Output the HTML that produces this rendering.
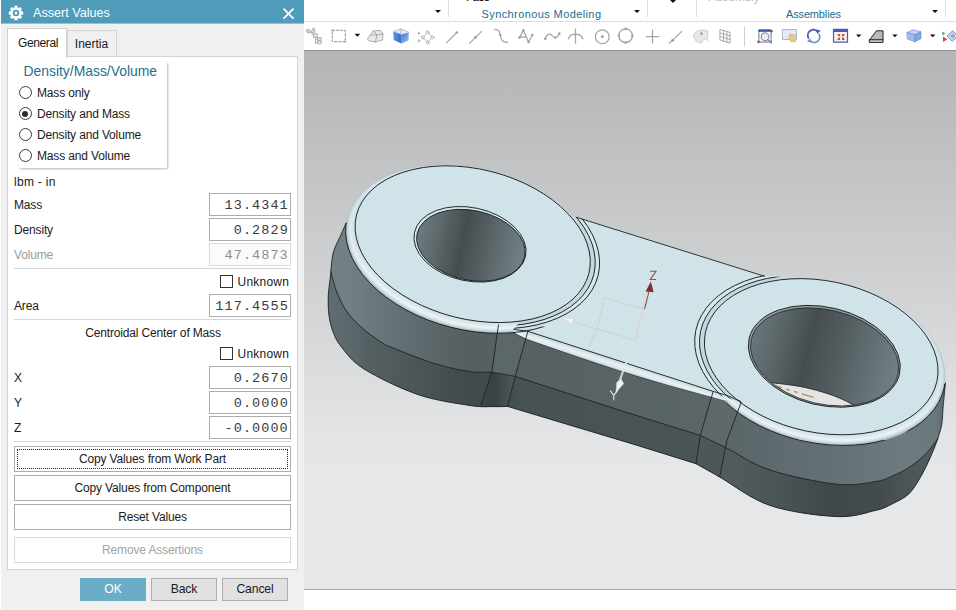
<!DOCTYPE html>
<html>
<head>
<meta charset="utf-8">
<title>Assert Values</title>
<style>
*{box-sizing:border-box;margin:0;padding:0}
html,body{width:956px;height:610px;overflow:hidden;background:#fff}
body{position:relative;font-family:"Liberation Sans",sans-serif;font-size:12px;letter-spacing:-.15px;color:#1a1a1a}
.abs{position:absolute}
#scene{position:absolute;left:0;top:0;width:956px;height:610px}
/* ribbon */
#ribbon{position:absolute;left:304px;top:0;width:652px;height:50px;background:#fff;overflow:hidden}
.rsep{position:absolute;top:0;width:1px;height:17px;background:#dcdcdc}
.rlabel{position:absolute;top:7px;height:14px;line-height:14px;font-size:11px;color:#1b6d8c;white-space:nowrap}
.dd{position:absolute;width:0;height:0;border-left:3px solid transparent;border-right:3px solid transparent;border-top:3.5px solid #111}
/* dialog */
#dlg{position:absolute;left:1px;top:0;width:303px;height:610px;background:#f0f0f0}
#title{position:absolute;left:0;top:0;width:303px;height:24px;background:#4e9cba;color:#fff;border-bottom:1px solid #93c3d5}
#title .t{position:absolute;left:32px;top:4.8px;font-size:12.6px;line-height:17px;letter-spacing:0px;white-space:nowrap;color:#fdfefe}
#panel{position:absolute;left:6px;top:56px;width:291px;height:514px;background:#fff;border:1px solid #d4d4d4}
.tab{position:absolute;border:1px solid #d4d4d4;border-bottom:none;white-space:nowrap;text-align:center}
.lbl{position:absolute;height:16px;line-height:16px;white-space:nowrap}
.inp{position:absolute;left:208px;width:82px;height:23px;border:1px solid #adadad;background:#fff;font-family:"Liberation Mono",monospace;font-size:13.5px;letter-spacing:1.08px;text-align:right;line-height:24px;padding-right:1.2px;color:#3a3a3a;white-space:nowrap}
.inp.dis{border-color:#dcdcdc;color:#8d8d8d;background:#fbfbfb}
.hr{position:absolute;left:13px;width:277px;height:1px;background:#d5d5d5}
.radio{position:absolute;left:17.8px;width:13px;height:13px;border:1px solid #3c3c3c;border-radius:50%;background:#fff}
.radio.on::after{content:"";position:absolute;left:2.5px;top:2.5px;width:6px;height:6px;border-radius:50%;background:#2a2a2a}
.chk{position:absolute;left:219px;width:13px;height:13px;border:1px solid #333;background:#fff}
.btn{position:absolute;left:13px;width:277px;height:26px;border:1px solid #adadad;background:#fff;text-align:center;line-height:24px;white-space:nowrap}
.btn.dis{border-color:#dadada;color:#a3a3a3}
.btn2{position:absolute;top:578px;width:66px;height:23px;border:1px solid #adadad;background:#e1e1e1;text-align:center;line-height:21px;font-size:12.2px}
</style>
</head>
<body>

<!-- ===== 3D viewport + model ===== -->
<svg id="scene" viewBox="0 0 956 610" width="956" height="610">
<defs>
<linearGradient id="bg" x1="0" y1="0" x2="0" y2="1"><stop offset="0" stop-color="#b3b4b6"/><stop offset=".74" stop-color="#e5e6e7"/><stop offset="1" stop-color="#e7e8e9"/></linearGradient>
<linearGradient id="wallU" gradientUnits="userSpaceOnUse" x1="328" y1="0" x2="946" y2="0"><stop offset="0.000" stop-color="#6f7e83"/><stop offset="0.028" stop-color="#728186"/><stop offset="0.068" stop-color="#6b797d"/><stop offset="0.149" stop-color="#5f6b6e"/><stop offset="0.214" stop-color="#566062"/><stop offset="0.278" stop-color="#565f62"/><stop offset="0.440" stop-color="#596366"/><stop offset="0.602" stop-color="#5a6568"/><stop offset="0.650" stop-color="#5a6568"/><stop offset="0.731" stop-color="#5f6b6e"/><stop offset="0.845" stop-color="#667376"/><stop offset="0.926" stop-color="#6d7a7e"/><stop offset="0.982" stop-color="#6b787c"/><stop offset="1.000" stop-color="#5f6b6e"/></linearGradient>
<linearGradient id="wallL" gradientUnits="userSpaceOnUse" x1="328" y1="0" x2="946" y2="0"><stop offset="0.000" stop-color="#606d70"/><stop offset="0.028" stop-color="#5d6a6d"/><stop offset="0.068" stop-color="#556063"/><stop offset="0.149" stop-color="#4b5456"/><stop offset="0.214" stop-color="#434b4d"/><stop offset="0.278" stop-color="#41494b"/><stop offset="0.311" stop-color="#485153"/><stop offset="0.586" stop-color="#4a5355"/><stop offset="0.650" stop-color="#525c5f"/><stop offset="0.731" stop-color="#4a5355"/><stop offset="0.812" stop-color="#3f4749"/><stop offset="0.893" stop-color="#434b4d"/><stop offset="0.958" stop-color="#4f595b"/><stop offset="1.000" stop-color="#566164"/></linearGradient>
<linearGradient id="fb9" x1="0" y1="0" x2="0" y2="1"><stop offset=".4" stop-color="#b2c4ca"/><stop offset=".85" stop-color="#acbcc1"/></linearGradient><linearGradient id="fb8" x1="0" y1="0" x2="0" y2="1"><stop offset=".4" stop-color="#c0d2d8"/><stop offset=".85" stop-color="#c3d2d6"/></linearGradient><linearGradient id="fb7" x1="0" y1="0" x2="0" y2="1"><stop offset=".4" stop-color="#cbdbe1"/><stop offset=".85" stop-color="#d6e2e6"/></linearGradient><linearGradient id="fb6" x1="0" y1="0" x2="0" y2="1"><stop offset=".4" stop-color="#d0e0e5"/><stop offset=".85" stop-color="#e3ecef"/></linearGradient><linearGradient id="fb5" x1="0" y1="0" x2="0" y2="1"><stop offset=".4" stop-color="#d6e5ea"/><stop offset=".85" stop-color="#ecf3f5"/></linearGradient><linearGradient id="fb4" x1="0" y1="0" x2="0" y2="1"><stop offset=".4" stop-color="#d4e3e9"/><stop offset=".85" stop-color="#e4edf0"/></linearGradient><linearGradient id="fb3" x1="0" y1="0" x2="0" y2="1"><stop offset=".4" stop-color="#d2e2e8"/><stop offset=".85" stop-color="#dce8ec"/></linearGradient><linearGradient id="fb2" x1="0" y1="0" x2="0" y2="1"><stop offset=".4" stop-color="#d0e1e7"/><stop offset=".85" stop-color="#d7e5e9"/></linearGradient><linearGradient id="fb1" x1="0" y1="0" x2="0" y2="1"><stop offset=".4" stop-color="#cee0e6"/><stop offset=".85" stop-color="#d2e2e7"/></linearGradient>
<linearGradient id="blendL" gradientUnits="userSpaceOnUse" x1="483" y1="0" x2="514" y2="0"><stop offset="0" stop-color="#3f4648"/><stop offset=".35" stop-color="#3a4143"/><stop offset="1" stop-color="#4f585a"/></linearGradient>
<linearGradient id="filw" gradientUnits="userSpaceOnUse" x1="600" y1="354.7" x2="597" y2="364">
 <stop offset="0" stop-color="#c0d3d9"/><stop offset=".25" stop-color="#d9e6ea"/><stop offset=".5" stop-color="#e9f1f3"/><stop offset=".78" stop-color="#d6e2e6"/><stop offset="1" stop-color="#b2c2c7"/></linearGradient>
<linearGradient id="holeL" x1="0" y1="0" x2="1" y2="0"><stop offset="0" stop-color="#6f7c7f"/><stop offset=".2" stop-color="#5c676a"/><stop offset=".42" stop-color="#454d4f"/><stop offset=".6" stop-color="#535d60"/><stop offset=".8" stop-color="#647174"/><stop offset="1" stop-color="#748286"/></linearGradient>
<linearGradient id="holeR" x1="0" y1="0" x2="1" y2="0"><stop offset="0" stop-color="#6a777a"/><stop offset=".18" stop-color="#5a6568"/><stop offset=".38" stop-color="#454d4f"/><stop offset=".58" stop-color="#525c5f"/><stop offset=".8" stop-color="#637073"/><stop offset="1" stop-color="#728084"/></linearGradient>
</defs>
<rect x="304" y="50" width="652" height="540" fill="url(#bg)"/>
<path d="M370,205 L346.2,222.8 C345.1,225.2 341.8,232.9 339.7,237.5 C337.6,242.1 335.3,246.1 333.9,250.4 C332.5,254.7 332.0,259.4 331.5,263.4 C331.0,267.4 331.1,270.6 330.7,274.6 C330.3,278.7 329.4,283.6 329.0,287.7 C328.6,291.8 328.2,294.5 328.2,299.2 C328.2,303.9 328.2,310.1 329.0,315.6 C329.8,321.1 331.1,326.8 333.1,332.0 C335.2,337.2 336.2,340.5 341.3,346.7 C346.4,352.9 351.2,361.0 364.0,369.0 C376.8,377.0 400.3,388.5 418.0,394.6 C435.7,400.7 457.3,403.5 470.0,405.5 C482.7,407.5 487.8,406.5 494.0,406.6 C500.2,406.8 505.2,406.4 507.5,406.4 L636,445 L696,463.7 C700.0,465.9 707.4,470.0 719.7,477.0 C732.0,484.0 750.5,498.9 770.0,505.5 C789.5,512.1 819.1,515.8 836.8,516.6 C854.5,517.4 866.7,512.4 876.0,510.3 C885.3,508.2 886.9,506.5 892.4,503.8 C897.9,501.1 904.1,498.3 908.8,493.9 C913.4,489.5 916.8,483.5 920.3,477.5 C923.8,471.5 927.4,463.9 930.1,457.9 C932.8,451.9 934.8,447.0 936.7,441.5 C938.6,436.0 940.5,431.1 941.6,425.1 C942.7,419.1 942.6,412.5 943.2,405.4 C943.9,398.3 945.1,386.3 945.5,382.5 L930,378 L820,300 L760,290 L590,230 L470,200 Z" fill="url(#wallU)"/>
<path d="M330.7,271.3 C331.6,274.6 333.8,284.4 336.4,291.0 C339.0,297.6 342.1,304.7 346.2,310.7 C350.3,316.7 355.2,321.8 361.0,327.0 C366.8,332.2 375.4,338.3 380.7,341.8 C386.0,345.3 383.8,344.3 393.0,348.0 C402.2,351.7 423.2,360.1 436.0,364.0 C448.8,367.9 460.7,370.2 470.0,371.6 C479.3,373.0 484.3,371.6 491.8,372.4 C499.3,373.2 511.3,375.7 515.2,376.4 L620,410.3 L700.3,435.4 C704.5,437.4 713.9,441.7 725.5,447.5 C737.1,453.3 751.5,463.9 770.0,470.0 C788.5,476.1 819.1,482.3 836.8,484.2 C854.5,486.1 866.7,482.9 876.0,481.5 C885.3,480.1 886.9,478.2 892.4,475.9 C897.9,473.6 903.3,471.2 908.8,467.7 C914.3,464.1 920.3,459.5 925.2,454.6 C930.1,449.7 936.1,440.9 938.3,438.2 C936.9,441.5 933.1,451.3 930.1,457.9 C927.1,464.4 923.8,471.5 920.3,477.5 C916.8,483.5 913.4,489.5 908.8,493.9 C904.1,498.3 897.9,501.1 892.4,503.8 C886.9,506.5 885.3,508.2 876.0,510.3 C866.7,512.4 854.5,517.4 836.8,516.6 C819.1,515.8 789.5,512.1 770.0,505.5 C750.5,498.9 732.0,484.0 719.7,477.0 C707.4,470.0 700.0,465.9 696.0,463.7 L636,445 L507.5,406.4 C505.2,406.4 500.2,406.8 494.0,406.6 C487.8,406.5 482.7,407.5 470.0,405.5 C457.3,403.5 435.7,400.7 418.0,394.6 C400.3,388.5 376.8,377.0 364.0,369.0 C351.2,361.0 346.4,352.9 341.3,346.7 C336.2,340.5 335.2,337.2 333.1,332.0 C331.1,326.8 329.8,321.1 329.0,315.6 C328.2,310.1 328.2,303.9 328.2,299.2 C328.2,294.5 328.6,291.8 329.0,287.7 C329.4,283.6 330.4,276.8 330.7,274.6 Z" fill="url(#wallL)"/>
<path d="M498.5,325 L527.7,332 L515.2,376.4 L491.8,372.4 Z" fill="#5c6769"/>
<path d="M491.8,372.4 L515.2,376.4 L507.5,406.4 L480.7,406.4 Z" fill="url(#blendL)"/>
<path d="M713,392 L741,402 L725.5,447.5 L700.3,435.4 Z" fill="#5e696c"/>
<path d="M700.3,435.4 L725.5,447.5 L719.7,477 L696,463.7 Z" fill="#4d5659"/>
<ellipse cx="470.70" cy="249.20" rx="127.40" ry="80.60" transform="rotate(14.10 470.70 249.20)" fill="url(#fb9)"/>
<ellipse cx="470.92" cy="248.64" rx="126.56" ry="79.98" transform="rotate(14.10 470.92 248.64)" fill="url(#fb8)"/>
<ellipse cx="471.14" cy="248.09" rx="125.71" ry="79.36" transform="rotate(14.10 471.14 248.09)" fill="url(#fb7)"/>
<ellipse cx="471.37" cy="247.53" rx="124.87" ry="78.73" transform="rotate(14.10 471.37 247.53)" fill="url(#fb6)"/>
<ellipse cx="471.59" cy="246.98" rx="124.02" ry="78.11" transform="rotate(14.10 471.59 246.98)" fill="url(#fb5)"/>
<ellipse cx="471.81" cy="246.42" rx="123.18" ry="77.49" transform="rotate(14.10 471.81 246.42)" fill="url(#fb4)"/>
<ellipse cx="472.03" cy="245.87" rx="122.33" ry="76.87" transform="rotate(14.10 472.03 245.87)" fill="url(#fb3)"/>
<ellipse cx="472.26" cy="245.31" rx="121.49" ry="76.24" transform="rotate(14.10 472.26 245.31)" fill="url(#fb2)"/>
<ellipse cx="472.48" cy="244.76" rx="120.64" ry="75.62" transform="rotate(14.10 472.48 244.76)" fill="url(#fb1)"/>
<ellipse cx="821.60" cy="361.70" rx="125.30" ry="81.45" transform="rotate(11.80 821.60 361.70)" fill="url(#fb9)"/>
<ellipse cx="821.56" cy="361.14" rx="124.52" ry="80.83" transform="rotate(11.80 821.56 361.14)" fill="url(#fb8)"/>
<ellipse cx="821.51" cy="360.59" rx="123.74" ry="80.21" transform="rotate(11.80 821.51 360.59)" fill="url(#fb7)"/>
<ellipse cx="821.47" cy="360.03" rx="122.97" ry="79.58" transform="rotate(11.80 821.47 360.03)" fill="url(#fb6)"/>
<ellipse cx="821.42" cy="359.48" rx="122.19" ry="78.96" transform="rotate(11.80 821.42 359.48)" fill="url(#fb5)"/>
<ellipse cx="821.38" cy="358.92" rx="121.41" ry="78.34" transform="rotate(11.80 821.38 358.92)" fill="url(#fb4)"/>
<ellipse cx="821.33" cy="358.37" rx="120.63" ry="77.72" transform="rotate(11.80 821.33 358.37)" fill="url(#fb3)"/>
<ellipse cx="821.29" cy="357.81" rx="119.86" ry="77.09" transform="rotate(11.80 821.29 357.81)" fill="url(#fb2)"/>
<ellipse cx="821.24" cy="357.26" rx="119.08" ry="76.47" transform="rotate(11.80 821.24 357.26)" fill="url(#fb1)"/>
<path d="M513.5,329.5 L527,331 L712,391 L727,395.5 L727,401.5 L710.4,396.9 L665,384.5 L620,371 L575,356 L526.9,339.3 L513.5,332.6 Z" fill="url(#filw)"/>
<ellipse cx="472.70" cy="244.20" rx="119.80" ry="75.00" transform="rotate(14.10 472.70 244.20)" fill="#cfe3e9"/>
<ellipse cx="821.20" cy="356.70" rx="118.30" ry="75.85" transform="rotate(11.80 821.20 356.70)" fill="#cfe3e9"/>
<path d="M577.7,217.7 L763.6,276 L800,300 L741,401 L727,395.5 L712,391 L527,331 L514,329.5 L560,300 Z" fill="#cfe3e9"/>
<clipPath id="cWeb"><path d="M574,216.3 L765,276 L800,278 L800,330 L743,403 L513,329.5 L540,300 Z"/></clipPath>
<g clip-path="url(#cWeb)"><ellipse cx="472.70" cy="244.20" rx="129.26" ry="80.92" transform="rotate(14.10 472.70 244.20)" fill="#d6e7eb"/><ellipse cx="472.70" cy="244.20" rx="124.83" ry="78.15" transform="rotate(14.10 472.70 244.20)" fill="#c4d9df"/><ellipse cx="472.70" cy="244.20" rx="119.80" ry="75.00" transform="rotate(14.10 472.70 244.20)" fill="#cfe3e9"/><ellipse cx="821.20" cy="356.70" rx="128.12" ry="82.15" transform="rotate(11.80 821.20 356.70)" fill="#d6e7eb"/><ellipse cx="821.20" cy="356.70" rx="123.27" ry="79.04" transform="rotate(11.80 821.20 356.70)" fill="#c4d9df"/><ellipse cx="821.20" cy="356.70" rx="118.30" ry="75.85" transform="rotate(11.80 821.20 356.70)" fill="#cfe3e9"/></g>
<ellipse cx="472.70" cy="244.20" rx="119.80" ry="75.00" transform="rotate(14.10 472.70 244.20)" fill="#cfe3e9"/>
<ellipse cx="821.20" cy="356.70" rx="118.30" ry="75.85" transform="rotate(11.80 821.20 356.70)" fill="#cfe3e9"/>
<ellipse cx="470.00" cy="244.30" rx="56.80" ry="36.70" transform="rotate(12.00 470.00 244.30)" fill="#dbe8ec"/>
<ellipse cx="470.90" cy="245.30" rx="55.00" ry="34.90" transform="rotate(12.00 470.90 245.30)" fill="url(#holeL)"/>
<ellipse cx="824.30" cy="356.30" rx="77.30" ry="49.00" transform="rotate(13.50 824.30 356.30)" fill="#909ea2"/>
<ellipse cx="824.60" cy="356.90" rx="75.40" ry="47.10" transform="rotate(13.50 824.60 356.90)" fill="url(#holeR)"/>
<clipPath id="chR"><ellipse cx="824.60" cy="356.90" rx="75.40" ry="47.10" transform="rotate(13.50 824.60 356.90)" /></clipPath>
<g clip-path="url(#chR)"><path d="M763,381.3 C772,383 780,383.6 787.4,384.5 C796,385.6 803,387 810.3,388.7 C819,390.8 826,393 833.3,395.6 C842,399 850,402.5 860,408.8 L870,425 L760,420 Z" fill="#e4e4e4"/><path d="M763,381.3 C772,383 780,383.6 787.4,384.5 C796,385.6 803,387 810.3,388.7 C819,390.8 826,393 833.3,395.6 C842,399 850,402.5 860,408.8" fill="none" stroke="#23282a" stroke-width=".9"/><path d="M770.2,384.3 L813.8,397.5" stroke="#ab9c5c" stroke-width="1.5" stroke-dasharray="12 4.6 3.7 4.6 3.7 4.6" fill="none"/></g>
<path d="M346.2,222.8 C345.1,225.2 341.8,232.9 339.7,237.5 C337.6,242.1 335.3,246.1 333.9,250.4 C332.5,254.7 332.0,259.4 331.5,263.4 C331.0,267.4 331.1,270.6 330.7,274.6 C330.3,278.7 329.4,283.6 329.0,287.7 C328.6,291.8 328.2,294.5 328.2,299.2 C328.2,303.9 328.2,310.1 329.0,315.6 C329.8,321.1 331.1,326.8 333.1,332.0 C335.2,337.2 336.2,340.5 341.3,346.7 C346.4,352.9 351.2,361.0 364.0,369.0 C376.8,377.0 400.3,388.5 418.0,394.6 C435.7,400.7 457.3,403.5 470.0,405.5 C482.7,407.5 487.8,406.5 494.0,406.6 C500.2,406.8 505.2,406.4 507.5,406.4 L636,445 L696,463.7  C700.0,465.9 707.4,470.0 719.7,477.0 C732.0,484.0 750.5,498.9 770.0,505.5 C789.5,512.1 819.1,515.8 836.8,516.6 C854.5,517.4 866.7,512.4 876.0,510.3 C885.3,508.2 886.9,506.5 892.4,503.8 C897.9,501.1 904.1,498.3 908.8,493.9 C913.4,489.5 916.8,483.5 920.3,477.5 C923.8,471.5 927.4,463.9 930.1,457.9 C932.8,451.9 934.8,447.0 936.7,441.5 C938.6,436.0 940.5,431.1 941.6,425.1 C942.7,419.1 942.6,412.5 943.2,405.4 C943.9,398.3 945.1,386.3 945.5,382.5" fill="none" stroke="#1d2224" stroke-width="0.9"/>
<path d="M330.7,271.3 C331.6,274.6 333.8,284.4 336.4,291.0 C339.0,297.6 342.1,304.7 346.2,310.7 C350.3,316.7 355.2,321.8 361.0,327.0 C366.8,332.2 375.4,338.3 380.7,341.8 C386.0,345.3 383.8,344.3 393.0,348.0 C402.2,351.7 423.2,360.1 436.0,364.0 C448.8,367.9 460.7,370.2 470.0,371.6 C479.3,373.0 484.3,371.6 491.8,372.4 C499.3,373.2 511.3,375.7 515.2,376.4 L620,410.3 L700.3,435.4  C704.5,437.4 713.9,441.7 725.5,447.5 C737.1,453.3 751.5,463.9 770.0,470.0 C788.5,476.1 819.1,482.3 836.8,484.2 C854.5,486.1 866.7,482.9 876.0,481.5 C885.3,480.1 886.9,478.2 892.4,475.9 C897.9,473.6 903.3,471.2 908.8,467.7 C914.3,464.1 920.3,459.5 925.2,454.6 C930.1,449.7 936.1,440.9 938.3,438.2" fill="none" stroke="#1d2224" stroke-width="0.9" stroke-width="0.8"/>
<ellipse cx="472.70" cy="244.20" rx="119.80" ry="75.00" transform="rotate(14.10 472.70 244.20)" fill="none" stroke="#1d2224" stroke-width="0.9"/>
<ellipse cx="821.20" cy="356.70" rx="118.30" ry="75.85" transform="rotate(11.80 821.20 356.70)" fill="none" stroke="#1d2224" stroke-width="0.9"/>
<clipPath id="cFrontL"><path d="M300,223 L347,223 L420,300 L560,330 L560,420 L300,420 Z"/></clipPath>
<g clip-path="url(#cFrontL)"><ellipse cx="470.70" cy="249.20" rx="127.40" ry="80.60" transform="rotate(14.10 470.70 249.20)" fill="none" stroke="#1d2224" stroke-width="0.9" stroke-width="0.7"/></g>
<clipPath id="cFrontR"><path d="M727,398 L800,440 L900,440 L944,384 L956,384 L956,530 L700,530 Z"/></clipPath>
<g clip-path="url(#cFrontR)"><ellipse cx="821.60" cy="361.70" rx="125.30" ry="81.45" transform="rotate(11.80 821.60 361.70)" fill="none" stroke="#1d2224" stroke-width="0.9" stroke-width="0.7"/></g>
<g clip-path="url(#cWeb)"><ellipse cx="472.70" cy="244.20" rx="124.83" ry="78.15" transform="rotate(14.10 472.70 244.20)" fill="none" stroke="#1d2224" stroke-width="0.9" stroke-width="0.8"/><ellipse cx="472.70" cy="244.20" rx="129.26" ry="80.92" transform="rotate(14.10 472.70 244.20)" fill="none" stroke="#1d2224" stroke-width="0.9" stroke-width="0.8"/><ellipse cx="821.20" cy="356.70" rx="123.27" ry="79.04" transform="rotate(11.80 821.20 356.70)" fill="none" stroke="#1d2224" stroke-width="0.9" stroke-width="0.8"/><ellipse cx="821.20" cy="356.70" rx="128.12" ry="82.15" transform="rotate(11.80 821.20 356.70)" fill="none" stroke="#1d2224" stroke-width="0.9" stroke-width="0.8"/></g>
<path d="M576.8,217.4 L765,276.4" fill="none" stroke="#1d2224" stroke-width="0.9"/>
<path d="M513.5,329.5 L527,331 L712,391 L727,395.5 L741,401.5" fill="none" stroke="#1d2224" stroke-width="0.9" stroke-width="0.8"/>
<path d="M513.5,332.6 C515.7,333.7 516.6,335.4 526.9,339.3 C537.1,343.2 559.5,350.7 575.0,356.0 C590.5,361.3 605.0,366.2 620.0,371.0 C635.0,375.8 649.9,380.2 665.0,384.5 C680.1,388.8 700.1,394.1 710.4,396.9 C720.7,399.7 724.2,400.7 727.0,401.5" fill="none" stroke="#1d2224" stroke-width="0.9" stroke-width="0.7" stroke-opacity=".6"/>
<path d="M498.5,324.5 L491.8,372.4 L480.7,406.4 M527.7,331.8 L515.2,376.4 L507.5,406.4 M713,392 L700.3,435.4 L696,463.7 M741.3,402 L727,440 L725.5,447.5 L719.7,477" fill="none" stroke="#1d2224" stroke-width="0.9" stroke-width="0.8"/>
<ellipse cx="470.00" cy="244.30" rx="56.80" ry="36.70" transform="rotate(12.00 470.00 244.30)" fill="none" stroke="#1d2224" stroke-width="0.9"/>
<ellipse cx="470.90" cy="245.30" rx="55.00" ry="34.90" transform="rotate(12.00 470.90 245.30)" fill="none" stroke="#1d2224" stroke-width="0.9" stroke-width="0.7"/>
<ellipse cx="824.30" cy="356.30" rx="77.30" ry="49.00" transform="rotate(13.50 824.30 356.30)" fill="none" stroke="#1d2224" stroke-width="0.9"/>
<ellipse cx="824.60" cy="356.90" rx="75.40" ry="47.10" transform="rotate(13.50 824.60 356.90)" fill="none" stroke="#1d2224" stroke-width="0.9" stroke-width="0.7" stroke-opacity=".8"/>
<g fill="none" stroke-linecap="round">
<path d="M604.5,298 L644.6,309.2 L634.7,340 M604.5,298 L597,329 L588.5,348 M573,321.5 L597,329 L634.7,340" stroke="#d3cfd0" stroke-width="1"/>
<path d="M644.6,309.2 L621,379 M634.7,340 L619.5,379" stroke="#e4e2e3" stroke-width="1"/>
<path d="M644.6,308.5 L648.6,292.5" stroke="#8c4a4a" stroke-width="1.2"/>
<path d="M634.7,340 L647.5,294" stroke="#d9cfd1" stroke-width=".9"/>
</g>
<path d="M650.9,281.5 L653.6,292.3 L645.6,291.6 Z" fill="#7a2e2e"/>
<path d="M620.9,378.4 L623.8,383.6 L615.8,392.8 L616.7,382.6 Z" fill="#f2f2f2" stroke="#c8c8c8" stroke-width=".4"/>
<path d="M560.6,317.6 L573.6,318 L572.4,324.4 Z" fill="#efefef" stroke="#cfcaca" stroke-width=".4"/>
<path d="M650.3,271.3 L656,271.3 L650.3,279.5 L656.2,279.5" fill="none" stroke="#9a4a4a" stroke-width="1.1"/>
<path d="M610.2,390.6 L613.8,395.4 L617.4,390.6 M613.8,395.4 L613.8,400.3" fill="none" stroke="#e9e9e9" stroke-width="1.1"/>

<rect x="304" y="50" width="652" height="1" fill="#8f9092"/>
<rect x="304" y="589" width="652" height="1" fill="#a9a9a9"/>
</svg>

<!-- ===== ribbon + toolbar ===== -->
<div id="ribbon">
  <div class="abs" style="left:0;top:21px;width:652px;height:1px;background:#dedede"></div>
  <div class="dd" style="left:131px;top:10px"></div>
  <div class="rsep" style="left:144px"></div>
  <div class="abs" style="left:162px;top:-8.9px;font-size:12px;line-height:12px;color:#000;letter-spacing:-.9px">Face</div>
  <div class="rlabel" style="left:177.5px;letter-spacing:.4px">Synchronous Modeling</div>
  <div class="dd" style="left:330px;top:10px"></div>
  <div class="rsep" style="left:343px"></div>
  <div class="dd" style="left:365.5px;top:0;border-top-width:3px"></div>
  <div class="rsep" style="left:392px"></div>
  <div class="abs" style="left:404.5px;top:-9.2px;font-size:12px;line-height:12px;color:#bdbdbd;letter-spacing:-.1px">Assembly</div>
  <div class="rlabel" style="left:482px;letter-spacing:-.15px">Assemblies</div>
  <div class="dd" style="left:628px;top:10px"></div>
  <div class="rsep" style="left:641px"></div>
  <svg class="abs" style="left:0;top:22px" width="652" height="28" viewBox="304 22 652 28">
<defs>
<linearGradient id="cubeA" x1="0" y1="0" x2="1" y2="1"><stop offset="0" stop-color="#2f74d6"/><stop offset="1" stop-color="#a9c9f2"/></linearGradient>
<linearGradient id="cubeB" x1="0" y1="0" x2="1" y2="0"><stop offset="0" stop-color="#5d97e6"/><stop offset="1" stop-color="#3b62c8"/></linearGradient>
</defs>
<g fill="none" stroke-linecap="round" stroke-linejoin="round">
<!-- 1 grayed assembly tree -->
<g stroke="#b4b4b4" stroke-width="1.1">
<path d="M306.5,30.5 q1.5,-2.5 3,0 t3,-1 t2.5,1.5 q-1,2.5 -3,1.5 t-3,0.5 q-2,-0.5 -2.5,-2.5 Z" fill="#d8d8d8"/>
<path d="M311.5,33 L314,35.5"/>
<rect x="313.7" y="33.8" width="3.6" height="3.6" fill="#eee"/>
<path d="M315.5,37.5 V43.5 M315.5,39.5 H317.5 M315.5,42.5 H317.5"/>
<rect x="317.6" y="37.6" width="3.4" height="2.8" fill="#eee"/>
<rect x="317.6" y="41" width="3.4" height="2.8" fill="#eee"/>
</g>
<!-- 2 dashed rect -->
<rect x="332.3" y="30.3" width="13" height="11.4" stroke="#8c8c8c" stroke-width="1" stroke-dasharray="2.3 1.8"/>
<circle cx="332.3" cy="30.3" r="1" fill="#aaa" stroke="none"/><circle cx="345.3" cy="41.7" r="1.1" fill="#aaa" stroke="none"/>
<path d="M354.6,33.8 h5.6 l-2.8,3 Z" fill="#111" stroke="none"/>
<!-- 4 gray block -->
<g stroke="#a3a3a3" stroke-width=".9" fill="#e9e9e9">
<path d="M367.6,38.6 L373.3,31 L380.5,30.4 L383,34 L382.6,40 L375.5,42 L369.5,41 Z"/>
<path d="M373.3,31 L376.8,35 L382.8,34 M376.8,35 L375.5,42 M370.3,35 L376.8,35" fill="none"/>
</g>
<!-- 5 blue cube -->
<path d="M393.3,31.6 L401,29.2 L408.8,32.2 L401.5,34.6 Z" fill="#dfeaf7" stroke="none"/>
<path d="M393.3,31.6 L401.5,34.6 L401.5,43.4 L393.6,40 Z" fill="url(#cubeB)" stroke="none"/>
<path d="M401.5,34.6 L408.8,32.2 L408.6,40.4 L401.5,43.4 Z" fill="url(#cubeA)" stroke="none"/>
<path d="M401,28.6 V35.4 M393.6,31.4 L401,29 L408.6,32" stroke="#e57aa0" stroke-width=".6"/>
<!-- 6 diamond with circles -->
<g stroke="#a8a8a8" stroke-width=".9">
<path d="M418,31.5 l2.6,1.7 l-2.6,1.7 Z M418,38.8 l2.6,2 l-2.6,2 Z" fill="#b0b0b0" stroke="none"/>
<path d="M427.6,32.4 L432.4,37.4 L427.6,42.4 L422.8,37.4 Z" stroke-dasharray="1.6 1.2"/>
<circle cx="427.6" cy="32.4" r="1.5" fill="#f4f4f4"/><circle cx="432.4" cy="37.4" r="1.5" fill="#f4f4f4"/>
<circle cx="427.6" cy="42.4" r="1.5" fill="#f4f4f4"/><circle cx="422.8" cy="37.4" r="1.5" fill="#f4f4f4"/>
</g>
<!-- 7..16 gray sketch tools -->
<g stroke="#a4a4a4" stroke-width="1.25">
<path d="M446.6,42.6 L456.6,32.6"/><circle cx="456.8" cy="32.5" r="1.3" fill="#a0a0a0" stroke="none"/>
<path d="M469.5,43.4 L481.6,31.4"/><circle cx="475.5" cy="37.4" r="1.4" fill="#a0a0a0" stroke="none"/>
<path d="M494.5,29.5 C499,29.3 499.5,32 500.2,35 C501,39.5 502,42.6 507.5,42.4"/><circle cx="500.3" cy="35" r="1.2" fill="#a0a0a0" stroke="none"/>
<path d="M519.5,37.5 L523.3,30.4 L528.6,42 L532.4,35 M519.5,37.5 C523,36.5 525,37 526.2,37.2"/>
<circle cx="523.3" cy="30.4" r="1.3" fill="#a0a0a0" stroke="none"/><circle cx="519.5" cy="37.6" r="1.3" fill="#a0a0a0" stroke="none"/><circle cx="528.6" cy="42" r="1.3" fill="#a0a0a0" stroke="none"/><circle cx="532.4" cy="35" r="1.3" fill="#a0a0a0" stroke="none"/>
<path d="M545.3,38.8 C547,33 550.5,33.2 552.5,36 C554.5,38.8 557.5,38 559.3,33.6"/>
<circle cx="545.3" cy="38.8" r="1.3" fill="#a0a0a0" stroke="none"/><circle cx="555.4" cy="37.4" r="1.2" fill="#a0a0a0" stroke="none"/><circle cx="559.3" cy="33.6" r="1.3" fill="#a0a0a0" stroke="none"/>
<path d="M575.5,29 V43 M568.4,38.8 C570.5,32.6 580.5,32.6 582.8,38.8"/>
<circle cx="602.3" cy="36.7" r="6.9"/><circle cx="602.3" cy="36.7" r="1.4" fill="#a0a0a0" stroke="none"/>
<circle cx="625.6" cy="35.7" r="6.8"/>
<circle cx="625.6" cy="28.9" r="1.3" fill="#a0a0a0" stroke="none"/><circle cx="632.4" cy="35.7" r="1.3" fill="#a0a0a0" stroke="none"/><circle cx="625.6" cy="42.5" r="1.3" fill="#a0a0a0" stroke="none"/><circle cx="618.8" cy="35.7" r="1.3" fill="#a0a0a0" stroke="none"/>
<path d="M646.4,36.6 H658.8 M652.5,30.2 V42.9"/>
<path d="M669.2,43.4 L681.8,31.4"/><circle cx="672.7" cy="40.3" r="1.4" fill="#a0a0a0" stroke="none"/>
</g>
<!-- 17 gray curved surface -->
<path d="M693.6,36 C694,31 700,28.6 708,31 L707.4,40.6 C705.6,38.4 703.2,38.4 701.6,43.2 C697,42.6 693.8,40.2 693.6,36 Z" fill="#e8e8e8" stroke="#c6c6c6" stroke-width=".8"/>
<rect x="700.2" y="32.4" width="2.4" height="2.4" fill="#9e9e9e" stroke="none"/>
<!-- 18 grid -->
<path d="M720.3,29.6 L730,32.4 V43.2 L720.3,40 Z M723.5,30.5 V41.1 M726.8,31.5 V42.1 M720.3,33 L730,36 M720.3,36.5 L730,39.6" stroke="#a0a0a0" stroke-width=".9"/>
<!-- separator -->
<path d="M744.5,26.5 V46" stroke="#cfcfcf" stroke-width="1"/>
<!-- 19 zoom window -->
<rect x="758.5" y="29.3" width="13" height="2.4" fill="#3f57a8" stroke="none"/>
<rect x="758.9" y="31" width="12.2" height="11" stroke="#3f57a8" stroke-width="1" stroke-dasharray="1.3 1.1"/>
<circle cx="765" cy="36.7" r="3.9" fill="#e9edf2" stroke="#8a8f98" stroke-width="1.1"/>
<path d="M767.8,39.8 L771.4,43" stroke="#6f7f9c" stroke-width="1.4"/>
<circle cx="771.6" cy="31.2" r="1.3" fill="#d83a3a" stroke="none"/><circle cx="758.4" cy="42" r="1.3" fill="#d83a3a" stroke="none"/>
<!-- 20 window with hand -->
<rect x="782.8" y="29.5" width="13.6" height="10" fill="#e4e9f2" stroke="#a9b6cf" stroke-width="1"/>
<path d="M788.6,36.5 L790.2,33.6 L791.2,35.6 L792.4,33.8 L793.6,35.4 L794.8,34.4 L796.4,38 L795.4,41.8 L791,41.8 Z" fill="#e6c796" stroke="#d4ad72" stroke-width=".6"/>
<!-- 21 refresh -->
<path d="M808.4,37.8 A5.6,5.6 0 0 1 817.6,31.6" stroke="#4b5fb0" stroke-width="1.9"/>
<path d="M819.2,34.4 A5.6,5.6 0 0 1 810,40.6" stroke="#7f92d4" stroke-width="1.9"/>
<path d="M816,29.4 L820.6,30.6 L817.4,34 Z" fill="#4b5fb0" stroke="none"/>
<path d="M811.6,42.8 L807,41.6 L810.2,38.2 Z" fill="#7f92d4" stroke="none"/>
<!-- 22 fit -->
<rect x="833.5" y="29.4" width="14" height="12.8" fill="#f3f1f4" stroke="#4b5fb0" stroke-width="1.2"/>
<rect x="833.5" y="29.4" width="14" height="2.6" fill="#4b5fb0" stroke="none"/>
<path d="M837.2,33.9 h2.9 v2.3 h-1.6 Z M844.9,33.9 h-2.9 v2.3 h1.6 Z M837.2,39.9 h2.9 v-2.3 h-1.6 Z M844.9,39.9 h-2.9 v-2.3 h1.6 Z" fill="#e0483a" stroke="none"/>
<path d="M856,34.4 h5.4 l-2.7,2.9 Z" fill="#111" stroke="none"/>
<!-- 23 wedge -->
<path d="M869.6,39.8 L876.4,30.8 L883,30.8 V39.8 Z" fill="#b9b9b9" stroke="#222" stroke-width="1"/>
<path d="M869.6,39.8 H883 V42.4 H869.6 Z" fill="#dcdcdc" stroke="#222" stroke-width="1"/>
<path d="M892.2,34.4 h5.4 l-2.7,2.9 Z" fill="#111" stroke="none"/>
<!-- 24 blue cube -->
<path d="M907.2,32.4 L913.4,29.8 L921,31.8 L915,34.6 Z" fill="#c7d8f4" stroke="#6c8bd4" stroke-width=".7"/>
<path d="M907.2,32.4 L915,34.6 V41.8 L907.6,39 Z" fill="#9ebaea" stroke="#6c8bd4" stroke-width=".7"/>
<path d="M915,34.6 L921,31.8 V38.6 L915,41.8 Z" fill="#86a6e2" stroke="#6c8bd4" stroke-width=".7"/>
<path d="M930,34.4 h5.4 l-2.7,2.9 Z" fill="#111" stroke="none"/>
<!-- 25 partial -->
<path d="M942.4,31.4 L945.4,33.4 L942.4,35.4 Z" fill="#3fae5a" stroke="none"/>
<path d="M943,36.2 L947.2,39.4 L943,42 Z" fill="#d8483e" stroke="none"/>
<path d="M947.2,36 L952.6,30.8 L958,36 L952.6,41 Z" fill="#c9d6ea" stroke="#6f86b8" stroke-width=".9"/>
<path d="M950.4,36 L952.8,33.6 L955.2,36 L952.8,38.4 Z" fill="#8fa6d6" stroke="none"/>
</g>

  </svg>
</div>

<!-- thin strip left of dialog -->
<div class="abs" style="left:0;top:0;width:1px;height:610px;background:#fff"></div>

<!-- ===== dialog ===== -->
<div id="dlg">
  <div id="title">
    <svg class="abs" style="left:7px;top:5px" width="16" height="16" viewBox="-8 -8 16 16">
      <g fill="#fff">
        <g id="teeth">
          <rect x="-1.7" y="-7.2" width="3.4" height="14.4" rx=".6"/>
          <rect x="-1.7" y="-7.2" width="3.4" height="14.4" rx=".6" transform="rotate(45)"/>
          <rect x="-1.7" y="-7.2" width="3.4" height="14.4" rx=".6" transform="rotate(90)"/>
          <rect x="-1.7" y="-7.2" width="3.4" height="14.4" rx=".6" transform="rotate(135)"/>
        </g>
        <circle r="5.5"/>
      </g>
      <circle r="3.3" fill="#4e9cba"/>
      <circle r="1.4" fill="#fff"/>
    </svg>
    <div class="t">Assert Values</div>
    <svg class="abs" style="left:281px;top:7px" width="13" height="13" viewBox="0 0 13 13"><path d="M1.5,1.6 L11.5,11.6 M11.5,1.6 L1.5,11.6" stroke="#fff" stroke-width="1.7" fill="none"/></svg>
  </div>

  <!-- tabs -->
  <div class="tab" style="left:66px;top:30px;width:50px;height:27px;background:#f0f0f0;line-height:27px;letter-spacing:0;padding-right:1px">Inertia</div>
  <div id="panel"></div>
  <div class="tab" style="left:6px;top:28px;width:60px;height:30px;background:#fff;line-height:28px;border-color:#d0d0d0;letter-spacing:-.4px;padding-left:2px">General</div>

  <!-- group box -->
  <div class="abs" style="left:18px;top:62px;width:148px;height:106px;background:#fff;box-shadow:1px 1px 2px rgba(0,0,0,.28)"></div>
  <div class="lbl" style="left:22.5px;top:63px;font-size:13.9px;color:#1f6f8e;letter-spacing:0">Density/Mass/Volume</div>
  <div class="radio" style="top:86px"></div><div class="lbl" style="left:36px;top:85px">Mass only</div>
  <div class="radio on" style="top:107px"></div><div class="lbl" style="left:36px;top:106px">Density and Mass</div>
  <div class="radio" style="top:128px"></div><div class="lbl" style="left:36px;top:127px">Density and Volume</div>
  <div class="radio" style="top:149px"></div><div class="lbl" style="left:36px;top:148px">Mass and Volume</div>

  <div class="lbl" style="left:13px;top:174px;letter-spacing:.3px">lbm - in</div>

  <div class="lbl" style="left:13px;top:196.5px">Mass</div>
  <div class="inp" style="top:193px">13.4341</div>
  <div class="lbl" style="left:13px;top:221.5px">Density</div>
  <div class="inp" style="top:218px">0.2829</div>
  <div class="lbl" style="left:13px;top:246.5px;color:#9a9a9a">Volume</div>
  <div class="inp dis" style="top:243px">47.4873</div>
  <div class="hr" style="top:268px"></div>

  <div class="chk" style="top:275px"></div><div class="lbl" style="left:236.6px;top:273.5px;letter-spacing:.2px">Unknown</div>
  <div class="lbl" style="left:13px;top:297.5px">Area</div>
  <div class="inp" style="top:294px">117.4555</div>
  <div class="hr" style="top:319px"></div>

  <div class="lbl" style="left:13px;top:324.5px;width:278px;text-align:center">Centroidal Center of Mass</div>
  <div class="chk" style="top:347px"></div><div class="lbl" style="left:236.6px;top:345.5px;letter-spacing:.2px">Unknown</div>
  <div class="lbl" style="left:13px;top:369.5px">X</div>
  <div class="inp" style="top:366px">0.2670</div>
  <div class="lbl" style="left:13px;top:394.5px">Y</div>
  <div class="inp" style="top:391px">0.0000</div>
  <div class="lbl" style="left:13px;top:419.5px">Z</div>
  <div class="inp" style="top:416px">-0.0000</div>
  <div class="hr" style="top:441px"></div>

  <div class="btn" style="top:446px">Copy Values from Work Part
    <div class="abs" style="left:2px;top:2px;right:2px;bottom:2px;border:1px dotted #222"></div>
  </div>
  <div class="btn" style="top:475px">Copy Values from Component</div>
  <div class="btn" style="top:504px">Reset Values</div>
  <div class="btn dis" style="top:537px">Remove Assertions</div>

  <div class="btn2" style="left:79px;background:#6aadc6;border-color:#6aadc6;color:#fff">OK</div>
  <div class="btn2" style="left:150px">Back</div>
  <div class="btn2" style="left:221px">Cancel</div>
</div>

</body>
</html>
